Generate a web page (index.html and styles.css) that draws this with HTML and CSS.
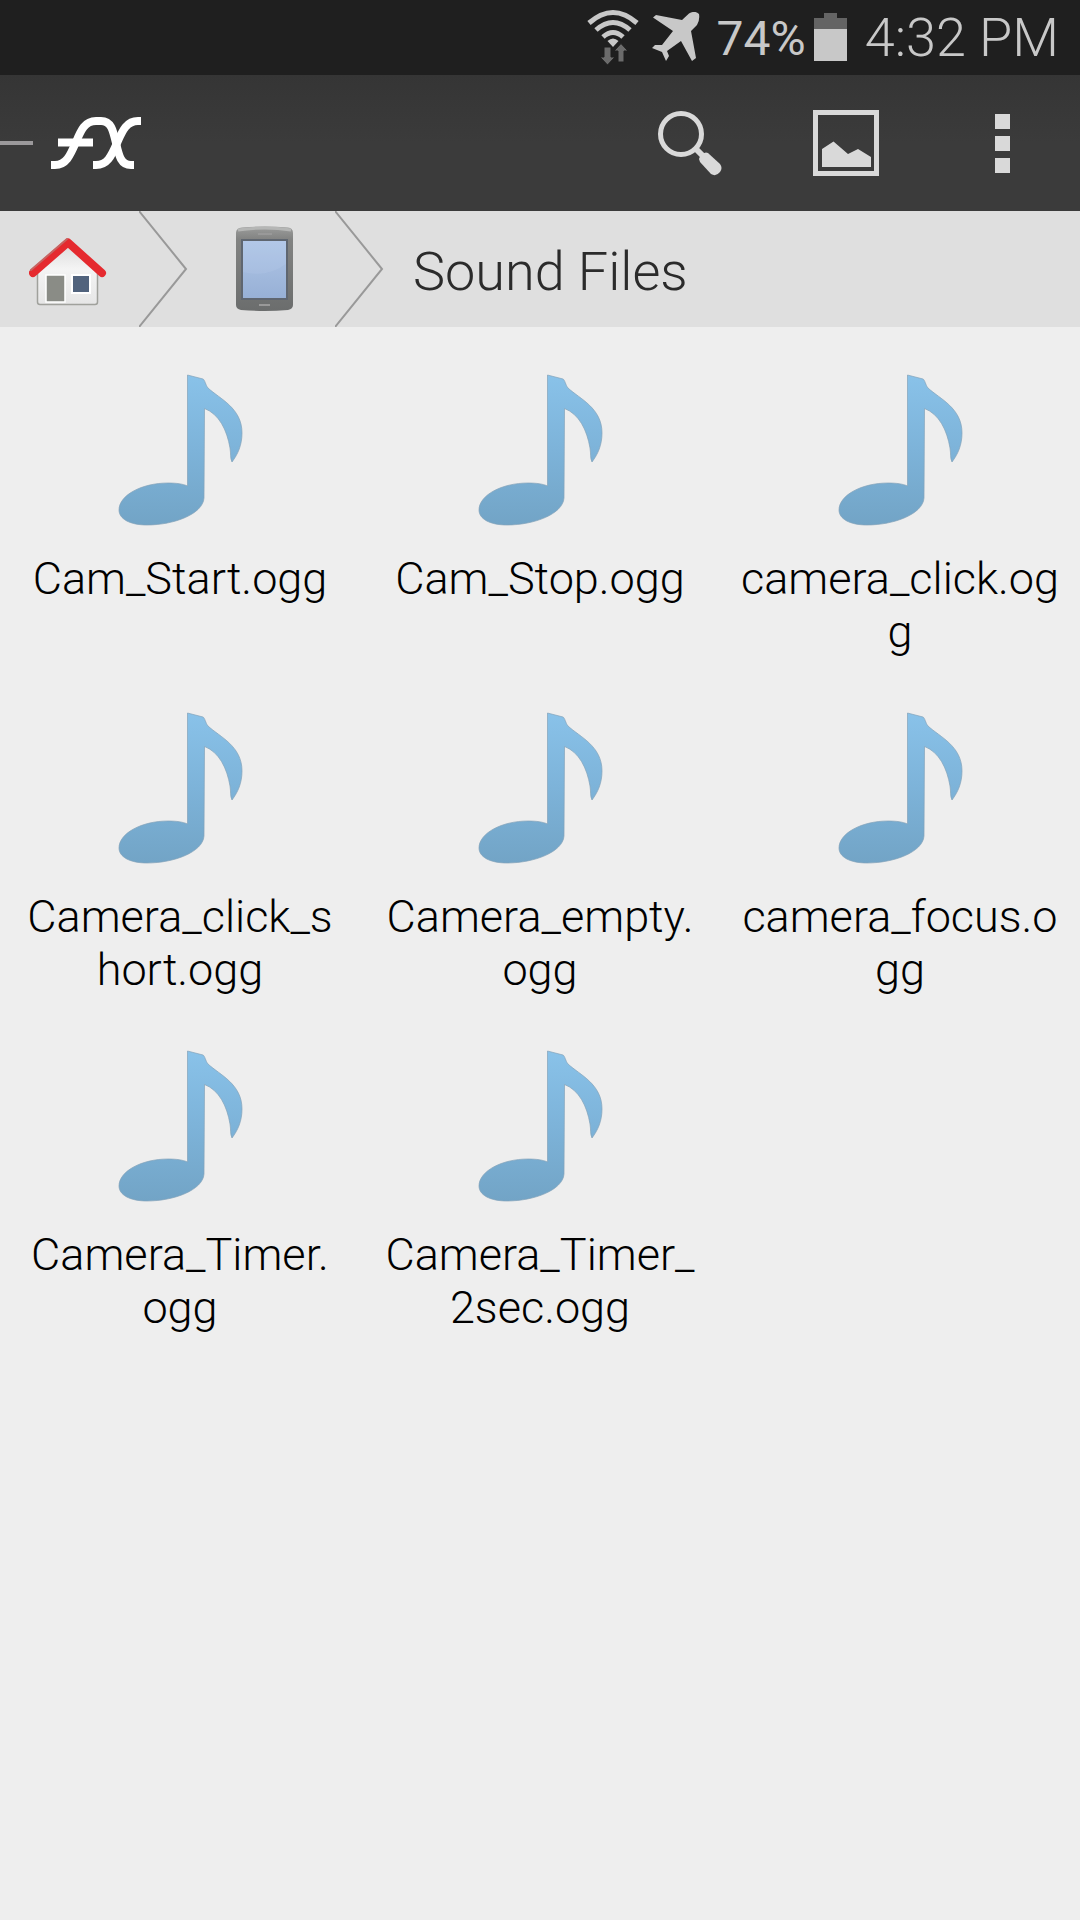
FILE: index.html
```html
<!DOCTYPE html>
<html lang="en">
<head>
<meta charset="utf-8">
<meta name="viewport" content="width=device-width, initial-scale=1">
<title>Sound Files</title>
<link rel="stylesheet" href="styles.css">
</head>
<body>
<svg class="defs" aria-hidden="true">
  <defs>
    <linearGradient id="noteFill" x1="0" y1="0" x2="0" y2="1">
      <stop offset="0" stop-color="#89c2e9"/>
      <stop offset="0.5" stop-color="#7db3d9"/>
      <stop offset="1" stop-color="#72a4c6"/>
    </linearGradient>
    <symbol id="note" viewBox="0 0 180 190">
      <path d="M97.500 25 L113 29 C115 30 115.500 35 118 38 C130 49 152 58 152 83 C152 95 148 104 142 112 C140 108 141 104 140 98 C137 80 129 64 114.500 58.500 L114 148 C113 164 84 175 57 175 C40 175 29 169 29 160 C29 145 52 133 78 133 C87 133 93 134 97.500 136 Z" fill="url(#noteFill)" stroke="#83a3b9" stroke-opacity="0.7" stroke-width="1"/>
    </symbol>
  </defs>
</svg>

<div class="status-bar">
  <svg class="wifi" width="52" height="56" viewBox="0 0 52 56" role="img" aria-label="Wi-Fi">
    <g fill="none" stroke="#c8c8c8" stroke-width="5">
      <path d="M2 14 Q26 -7 50 14"/>
      <path d="M9 21 Q26 6 43 21"/>
      <path d="M16 28 Q26 19 36 28"/>
    </g>
    <path d="M20.500 32 Q26 27 31.500 32 L26 38 Z" fill="#c8c8c8"/>
    <path d="M17 38 h7 v10 h4 L20.500 56 L13 48 h4 Z M31 53 v-11 h-4 L34 34.500 L41 42 h-4 v11 Z" fill="#6b6b6b" stroke="#1f1f1f" stroke-width="1"/>
  </svg>
  <svg class="plane" width="50" height="50" viewBox="0 0 50 50" role="img" aria-label="Airplane mode">
    <path d="M2 5.500 L5 3 L31 8 L38 1.500 Q44 -2 48 2 Q49 8 46 13 L40 19 L45 46 L41 49 L30 29 L16 39 L18 44 L15 49 L11 40 L1 36 L4 33 L11 33 L22 19 Z" fill="#c8c8c8"/>
  </svg>
  <span class="battery-level">74%</span>
  <svg class="battery" width="33" height="49" viewBox="0 0 33 49" aria-hidden="true">
    <path d="M0 6 H10 V1 H23 V6 H33 V18 H0 Z" fill="#646464"/>
    <path d="M0 17 H33 V49 H0 Z" fill="#c8c8c8"/>
  </svg>
  <time class="clock">4:32 PM</time>
</div>

<header class="app-bar">
  <button class="logo" type="button" aria-label="Open menu">
    <svg width="150" height="60" viewBox="0 43 150 60">
      <path d="M0 73 H33" stroke="#9b999b" stroke-width="4"/>
      <g fill="none" stroke="#fff" stroke-width="8">
        <path d="M58 72.500 H93"/>
        <path d="M51 95 H55 C66 95 70 86 76 72 C81 60 85 51 96 51 H101 C111 51 113 60 116 73 C119 86 121 95 131 95 H134"/>
        <path d="M141 51 H138 C126 51 122 62 117 73 C111 87 107 95 96 95 H93"/>
      </g>
    </svg>
  </button>
  <button class="action" type="button" aria-label="Search">
    <svg width="66" height="66" viewBox="0 0 66 66">
      <circle cx="24" cy="24" r="20.500" fill="none" stroke="#d9d9d9" stroke-width="5"/>
      <path d="M38 38 L46 46" stroke="#d9d9d9" stroke-width="6"/>
      <path d="M44 44 L49 42.500 L51 43 L63 54 Q66 58 63 62 Q59 67 54 64 L43 52 L42 49 Z" fill="#d9d9d9"/>
    </svg>
  </button>
  <button class="action" type="button" aria-label="View as images">
    <svg width="66" height="66" viewBox="0 0 66 66">
      <path d="M2.500 2.500 H63.500 V63.500 H2.500 Z" fill="none" stroke="#d9d9d9" stroke-width="5"/>
      <path d="M9 39 L20.500 31.500 L35 44 L45 39 L58 47 V57 H9 Z" fill="#d9d9d9"/>
    </svg>
  </button>
  <button class="action" type="button" aria-label="More options">
    <svg width="15" height="59" viewBox="0 0 15 59">
      <path d="M0 0 H15 V15 H0 Z M0 22 H15 V37 H0 Z M0 44 H15 V59 H0 Z" fill="#d9d9d9"/>
    </svg>
  </button>
</header>

<nav class="path" aria-label="Location">
  <a class="crumb home" href="#home" aria-label="Home">
    <svg width="78" height="70" viewBox="0 0 78 70">
      <defs>
        <linearGradient id="wall" x1="0" y1="0" x2="0" y2="1">
          <stop offset="0" stop-color="#dcdcdc"/>
          <stop offset="0.400" stop-color="#f4f4f4"/>
          <stop offset="1" stop-color="#e6e6e6"/>
        </linearGradient>
      </defs>
      <path d="M8.500 33 L39 8 L68.500 33 V65 Q68.500 67.500 66 67.500 H11 Q8.500 67.500 8.500 65 Z" fill="url(#wall)" stroke="#a0a19c" stroke-width="1.500"/>
      <path d="M17 38 H36 V65 H17 Z" fill="#8a8c86" stroke="#fff" stroke-width="1.500"/>
      <path d="M43 38 H61 V56 H43 Z" fill="#51637d" stroke="#fff" stroke-width="2"/>
      <path d="M4 36 L39 5.500 L73 36" fill="none" stroke="#e52a2f" stroke-width="8" stroke-linecap="round" stroke-linejoin="round"/>
      <path d="M2 33 L38 2" fill="none" stroke="#c76462" stroke-width="2" stroke-linecap="round"/>
    </svg>
  </a>
  <svg class="chevron" width="50" height="116" viewBox="0 0 50 116" aria-hidden="true"><path d="M0 0 L47 58 L0 116" fill="none" stroke="#999" stroke-width="2"/></svg>
  <a class="crumb device" href="#device" aria-label="Device storage">
    <svg width="60" height="86" viewBox="0 0 60 86">
      <defs>
        <linearGradient id="shell" x1="0" y1="0" x2="0" y2="1">
          <stop offset="0" stop-color="#9c9d9c"/>
          <stop offset="0.150" stop-color="#828382"/>
          <stop offset="1" stop-color="#6b6d6d"/>
        </linearGradient>
        <linearGradient id="screen" x1="0" y1="0" x2="0" y2="1">
          <stop offset="0" stop-color="#b0c6e6"/>
          <stop offset="1" stop-color="#97b0d6"/>
        </linearGradient>
      </defs>
      <path d="M1 7 Q1 2 7 1.500 Q30 -0.500 53 1.500 Q58 2 58 7 V79 Q58 83 53 84 Q30 86 6 84 Q1 83 1 79 Z" fill="url(#shell)"/>
      <path d="M3 4 Q30 0 56 4" fill="none" stroke="#b5b6b5" stroke-width="3"/>
      <path d="M7 14 H52 V73 H7 Z" fill="url(#screen)" stroke="#5f6670" stroke-width="2"/>
      <path d="M8 46 Q32 52 51 38 V15 H8 Z" fill="#bfd2f1" opacity="0.200"/>
      <path d="M23 8 H37 M24 79 H35" stroke="#999" stroke-width="2"/>
    </svg>
  </a>
  <svg class="chevron" width="50" height="116" viewBox="0 0 50 116" aria-hidden="true"><path d="M0 0 L47 58 L0 116" fill="none" stroke="#999" stroke-width="2"/></svg>
  <h1 class="folder">Sound Files</h1>
</nav>

<main>
  <ul class="files">
    <li><button class="file" type="button"><svg class="note"><use href="#note"/></svg><span class="name">Cam_Start.ogg</span></button></li>
    <li><button class="file" type="button"><svg class="note"><use href="#note"/></svg><span class="name">Cam_Stop.ogg</span></button></li>
    <li><button class="file" type="button"><svg class="note"><use href="#note"/></svg><span class="name">camera_click.ogg</span></button></li>
    <li><button class="file" type="button"><svg class="note"><use href="#note"/></svg><span class="name">Camera_click_short.ogg</span></button></li>
    <li><button class="file" type="button"><svg class="note"><use href="#note"/></svg><span class="name">Camera_empty.ogg</span></button></li>
    <li><button class="file" type="button"><svg class="note"><use href="#note"/></svg><span class="name">camera_focus.ogg</span></button></li>
    <li><button class="file" type="button"><svg class="note"><use href="#note"/></svg><span class="name">Camera_Timer.ogg</span></button></li>
    <li><button class="file" type="button"><svg class="note"><use href="#note"/></svg><span class="name">Camera_Timer_2sec.ogg</span></button></li>
  </ul>
</main>
</body>
</html>
```
FILE: styles.css
```css
* {
  box-sizing: border-box;
}

body {
  margin: 0;
  min-height: 100vh;
  background: #eeeeee;
  color: #000;
  font-family: Roboto, "Noto Sans", sans-serif;
  font-weight: 300;
}

button {
  padding: 0;
  border: 0;
  background: none;
  color: inherit;
  font: inherit;
  cursor: pointer;
}

svg {
  display: block;
  flex: none;
}

.defs {
  position: absolute;
  width: 0;
  height: 0;
}

.status-bar {
  display: flex;
  align-items: center;
  justify-content: flex-end;
  height: 75px;
  padding-right: 21px;
  background: #1f1f1f;
  color: #c8c8c8;
}

.wifi,
.plane,
.battery {
  margin-bottom: 2px;
}

.plane {
  margin-left: 12px;
  margin-right: 16px;
}

.battery-level {
  padding-top: 2px;
  font-size: 48px;
  line-height: 72px;
  font-weight: 400;
}

.battery {
  margin-left: 8px;
  margin-right: 18px;
}

.clock {
  font-size: 54px;
  line-height: 72px;
}

.app-bar {
  display: flex;
  height: 136px;
  background: linear-gradient(#353535, #3b3b3b 50%);
}

.logo {
  display: flex;
  align-items: center;
  margin-right: auto;
}

.action {
  display: flex;
  align-items: center;
  justify-content: center;
  width: 156px;
}

.path {
  display: flex;
  align-items: center;
  height: 116px;
  background: #dfdfdf;
}

.crumb {
  display: flex;
  align-items: center;
}

.home {
  padding: 6px 32px 0 29px;
}

.device {
  padding: 0 40px 0 46px;
}

.folder {
  margin: 0;
  padding: 5px 0 0 28px;
  color: #2b2b2b;
  font-size: 54px;
  font-weight: 300;
  line-height: 64px;
}

.files {
  display: grid;
  grid-template-columns: repeat(3, 1fr);
  margin: 0;
  padding: 0;
  list-style: none;
}

.file {
  display: flex;
  flex-direction: column;
  align-items: center;
  gap: 12px;
  width: 100%;
  min-height: 338px;
  padding: 23px 20px 0;
}

.note {
  width: 180px;
  height: 190px;
}

.name {
  font-size: 45px;
  line-height: 53px;
  text-align: center;
  word-break: break-all;
}
```
